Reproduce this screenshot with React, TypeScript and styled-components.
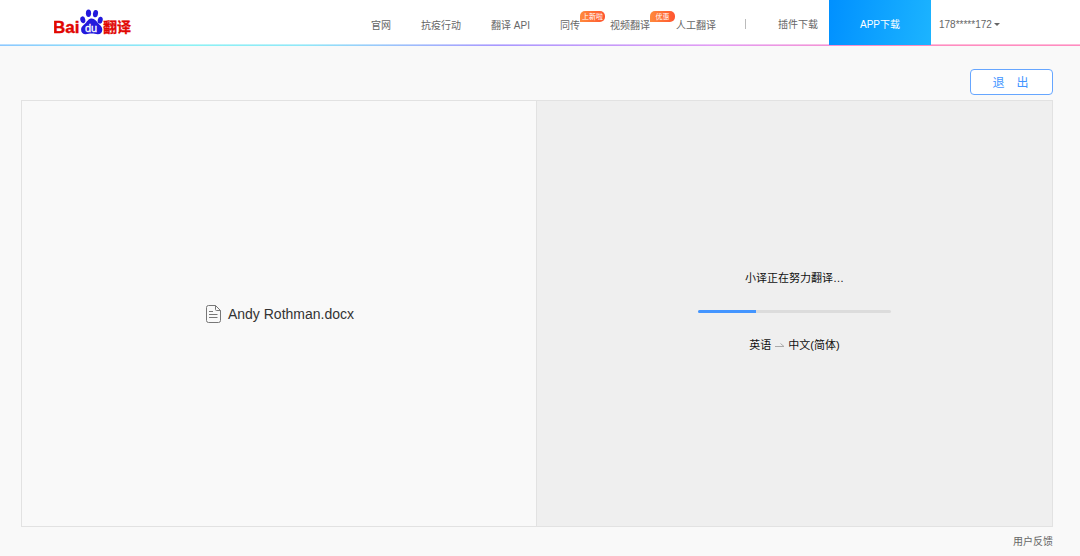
import React from "react";
import styled, { createGlobalStyle } from "styled-components";

const GlobalStyle = createGlobalStyle`
  *, *::before, *::after { box-sizing: border-box; }
  body {
    margin: 0;
    background: #f9f9f9;
    color: #666;
    font-family: "Liberation Sans", "Noto Sans CJK SC", sans-serif;
    font-size: 10px;
    line-height: 16px;
  }
  button { font-family: inherit; }
  a { color: inherit; text-decoration: none; }
`;

const Page = styled.div`
  display: flex;
  flex-direction: column;
  min-height: 100vh;
`;

const Header = styled.header`
  display: flex;
  height: 44px;
  background: #fff;
`;

const Rainbow = styled.div`
  height: 2px;
  background:
    linear-gradient(rgba(255, 255, 255, 0.4) 50%, transparent 50%),
    linear-gradient(90deg, #8cc8ff, #8cf2f4 17%, #90e8f8 28%, #a898ff 46%, #e29cf4 66%, #ff8cc0 84%, #ff8cc0);
`;

const LogoLink = styled.a`
  display: flex;
  align-items: center;
  margin-left: 54px;
`;

const Nav = styled.nav`
  display: flex;
  align-items: center;
  margin-left: auto;
  padding-top: 8px;
`;

const NavLink = styled.a<{ $gap?: number }>`
  position: relative;
  margin-right: ${(p) => p.$gap ?? 30}px;
  white-space: nowrap;
`;

const Badge = styled.span`
  position: absolute;
  left: 100%;
  bottom: 12px;
  width: 25px;
  height: 11px;
  border-radius: 5px 5px 5px 0;
  background: linear-gradient(90deg, #ff8a3c, #ff5530);
  color: #fff;
  font-size: 7px;
  line-height: 11px;
  text-align: center;
`;

const Tools = styled.div`
  display: flex;
  align-items: center;
  padding-top: 6px;
`;

const Separator = styled.span`
  width: 1px;
  height: 10px;
  margin: 0 32px 2px 0;
  background: #bbb;
`;

const AppLink = styled.a`
  display: flex;
  align-items: center;
  justify-content: center;
  width: 102px;
  height: 45px;
  padding-top: 5px;
  background: linear-gradient(100deg, #0090ff, #1cb4ff);
  color: #fff;
  z-index: 1;
`;

const UserButton = styled.button`
  display: flex;
  align-items: center;
  gap: 2px;
  width: 149px;
  padding: 4px 0 0 8px;
  border: 0;
  background: none;
  color: #666;
  font-size: 10px;
`;

const Caret = styled.span`
  border: 3px solid transparent;
  border-top-color: #666;
  border-bottom: 0;
`;

const Main = styled.main`
  display: flex;
  flex: 1;
  flex-direction: column;
  padding: 23px 27px 0 21px;
`;

const ExitButton = styled.button`
  align-self: flex-end;
  width: 83px;
  height: 26px;
  margin-bottom: 5px;
  padding: 0 2px 2px 0;
  border: 1px solid #66a6ff;
  border-radius: 4px;
  background: #fff;
  color: #4395ff;
  font-size: 12px;
  white-space: pre;
`;

const Panels = styled.div`
  display: grid;
  flex: 1;
  grid-template-columns: 1fr 1fr;
  border: 1px solid #e2e2e2;
`;

const SourcePanel = styled.section`
  display: flex;
  align-items: center;
  justify-content: center;
  gap: 7px;
  padding-left: 2px;
  border-right: 1px solid #e2e2e2;
  color: #333;
  font-size: 14px;
`;

const ResultPanel = styled.section`
  display: flex;
  flex-direction: column;
  align-items: center;
  justify-content: center;
  gap: 24px;
  padding-bottom: 4px;
  background: #efefef;
  color: #111;
  font-size: 11px;
`;

const Status = styled.p`
  margin: 0;
`;

const Track = styled.div`
  width: 193px;
  height: 3px;
  border-radius: 2px;
  background: #dcdcdc;
  overflow: hidden;
`;

const Bar = styled.div`
  height: 100%;
  background: #4395ff;
`;

const Languages = styled.p`
  display: flex;
  align-items: center;
  gap: 4px;
  margin: 0;
`;

const Footer = styled.footer`
  align-self: flex-end;
  padding: 7px 0 6px;
`;

const Logo = () => (
  <svg width="78" height="36" viewBox="0 0 78 36" role="img" aria-label="Baidu 翻译">
    <text x="-1" y="29" fill="#e10602" stroke="#e10602" strokeWidth="0.4" fontFamily="Liberation Sans, sans-serif" fontWeight="700" fontSize="17">Bai</text>
    <g fill="#2319dc">
      <ellipse cx="28.800" cy="15.800" rx="2.500" ry="3.500" transform="rotate(-12 28.800 15.800)" />
      <ellipse cx="34.500" cy="9.200" rx="2.600" ry="3.700" />
      <ellipse cx="41.500" cy="9.600" rx="2.500" ry="3.700" transform="rotate(10 41.500 9.600)" />
      <ellipse cx="46.200" cy="16.200" rx="2.500" ry="3.500" transform="rotate(12 46.200 16.200)" />
      <path d="M37.700 14.500c-3 0-4.200 2.400-6 4.400-2 2.200-4.600 3.400-4.600 6.800 0 2.800 1.900 4.500 4.500 4.500 2.200 0 3.900-.6 6.100-.6s3.900.6 6.100.6c2.800 0 4.500-1.900 4.500-4.500 0-3.600-2.600-4.600-4.400-6.800C42.100 16.900 40.700 14.500 37.700 14.500z" />
    </g>
    <text x="31" y="28" fill="#fff" fontFamily="Liberation Sans, sans-serif" fontSize="11" stroke="#fff" strokeWidth="0.3">du</text>
    <text x="49" y="28" fill="#e10602" stroke="#e10602" strokeWidth="0.3" fontFamily="Noto Sans CJK SC, sans-serif" fontWeight="700" fontSize="14">翻译</text>
  </svg>
);

const DocIcon = () => (
  <svg width="15" height="18" viewBox="0 0 15 18" fill="none" stroke="#777" aria-hidden="true">
    <path d="M2.500.5H9.500L14.500 5.500v10a2 2 0 0 1-2 2h-10a2 2 0 0 1-2-2v-13a2 2 0 0 1 2-2z" />
    <path d="M9.500.5V4.500a1 1 0 0 0 1 1h4M3 6.500h4M3 9.500h8.500M3 12.500h8.500" />
  </svg>
);

const Arrow = () => (
  <svg width="9" height="5" viewBox="0 0 9 5" fill="none" stroke="#aaa" aria-label="到" role="img">
    <path d="M0 3.500h9L5.500.5" />
  </svg>
);

const progress = 30;

export default function App() {
  return (
    <Page>
      <GlobalStyle />
      <Header>
        <LogoLink href="#"><Logo /></LogoLink>
        <Nav>
          <NavLink href="#">官网</NavLink>
          <NavLink href="#">抗疫行动</NavLink>
          <NavLink href="#">翻译 API</NavLink>
          <NavLink href="#">同传<Badge>上新啦</Badge></NavLink>
          <NavLink href="#" $gap={26}>视频翻译<Badge>优惠</Badge></NavLink>
          <NavLink href="#" $gap={29}>人工翻译</NavLink>
        </Nav>
        <Tools>
          <Separator />
          <NavLink href="#" $gap={11}>插件下载</NavLink>
        </Tools>
        <AppLink href="#">APP下载</AppLink>
        <UserButton type="button">178*****172<Caret /></UserButton>
      </Header>
      <Rainbow />
      <Main>
        <ExitButton type="button">退　出</ExitButton>
        <Panels>
          <SourcePanel><DocIcon />Andy Rothman.docx</SourcePanel>
          <ResultPanel>
            <Status>小译正在努力翻译…</Status>
            <Track role="progressbar" aria-label="翻译进度" aria-valuenow={progress} aria-valuemin={0} aria-valuemax={100}>
              <Bar style={{ width: `${progress}%` }} />
            </Track>
            <Languages><span>英语</span><Arrow /><span>中文(简体)</span></Languages>
          </ResultPanel>
        </Panels>
        <Footer><a href="#">用户反馈</a></Footer>
      </Main>
    </Page>
  );
}
